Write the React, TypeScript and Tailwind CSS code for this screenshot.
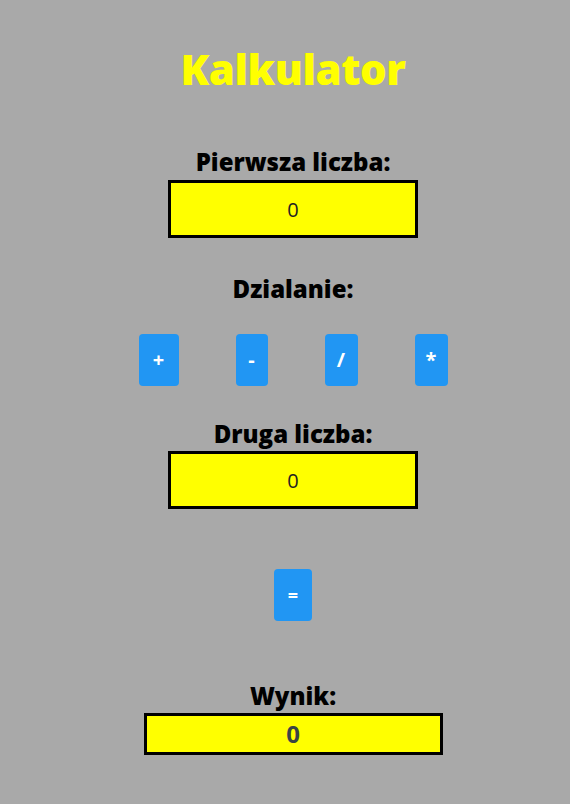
import React, { useState } from 'react';

const OPS = [
  { sign: '+', width: 'w-[40px]' },
  { sign: '-', width: 'w-[32px]' },
  { sign: '/', width: 'w-[33px]' },
  { sign: '*', width: 'w-[33px]' },
];

export default function App() {
  const [a, setA] = useState('0');
  const [b, setB] = useState('0');
  const [op, setOp] = useState('+');
  const [result, setResult] = useState<string | number>(0);

  const calc = () => {
    const x = parseFloat(a) || 0;
    const y = parseFloat(b) || 0;
    let r = 0;
    if (op === '+') r = x + y;
    if (op === '-') r = x - y;
    if (op === '/') r = y === 0 ? NaN : x / y;
    if (op === '*') r = x * y;
    setResult(isNaN(r) ? 'Błąd' : r);
  };

  return (
    <div className="min-h-screen bg-[#a9a9a9] pl-4 flex flex-col items-center font-['Segoe_UI','Open_Sans',sans-serif] text-black">
      <h1 className="mt-[41px] text-[42px] leading-[56px] font-extrabold tracking-[-0.5px] text-[#ffff00]">Kalkulator</h1>

      <label className="mt-[50px] text-2xl leading-[30px] font-extrabold">Pierwsza liczba:</label>
      <input
        value={a}
        onChange={(e) => setA(e.target.value)}
        className="mt-[3px] w-[250px] h-[58px] border-[3px] border-black bg-[#ffff00] text-center text-xl text-[#222] outline-none"
      />

      <p className="mt-[36px] text-2xl leading-[30px] font-extrabold">Dzialanie:</p>
      <div className="mt-[30px] flex gap-[57px]">
        {OPS.map((o) => (
          <button
            key={o.sign}
            onClick={() => setOp(o.sign)}
            className={`${o.width} h-[52px] rounded bg-[#2196f3] text-white text-xl font-bold`}
          >
            {o.sign}
          </button>
        ))}
      </div>

      <label className="mt-[33px] text-2xl leading-[30px] font-extrabold">Druga liczba:</label>
      <input
        value={b}
        onChange={(e) => setB(e.target.value)}
        className="mt-[2px] w-[250px] h-[58px] border-[3px] border-black bg-[#ffff00] text-center text-xl text-[#222] outline-none"
      />

      <button
        onClick={calc}
        className="mt-[60px] w-[38px] h-[52px] rounded bg-[#2196f3] text-white text-lg font-bold"
      >
        =
      </button>

      <p className="mt-[60px] text-2xl leading-[30px] font-extrabold">Wynik:</p>
      <div className="mt-[2px] w-[299px] h-[42px] border-[3px] border-black bg-[#ffff00] flex items-center justify-center text-2xl font-bold text-[#3a4444]">
        {result}
      </div>
    </div>
  );
}
